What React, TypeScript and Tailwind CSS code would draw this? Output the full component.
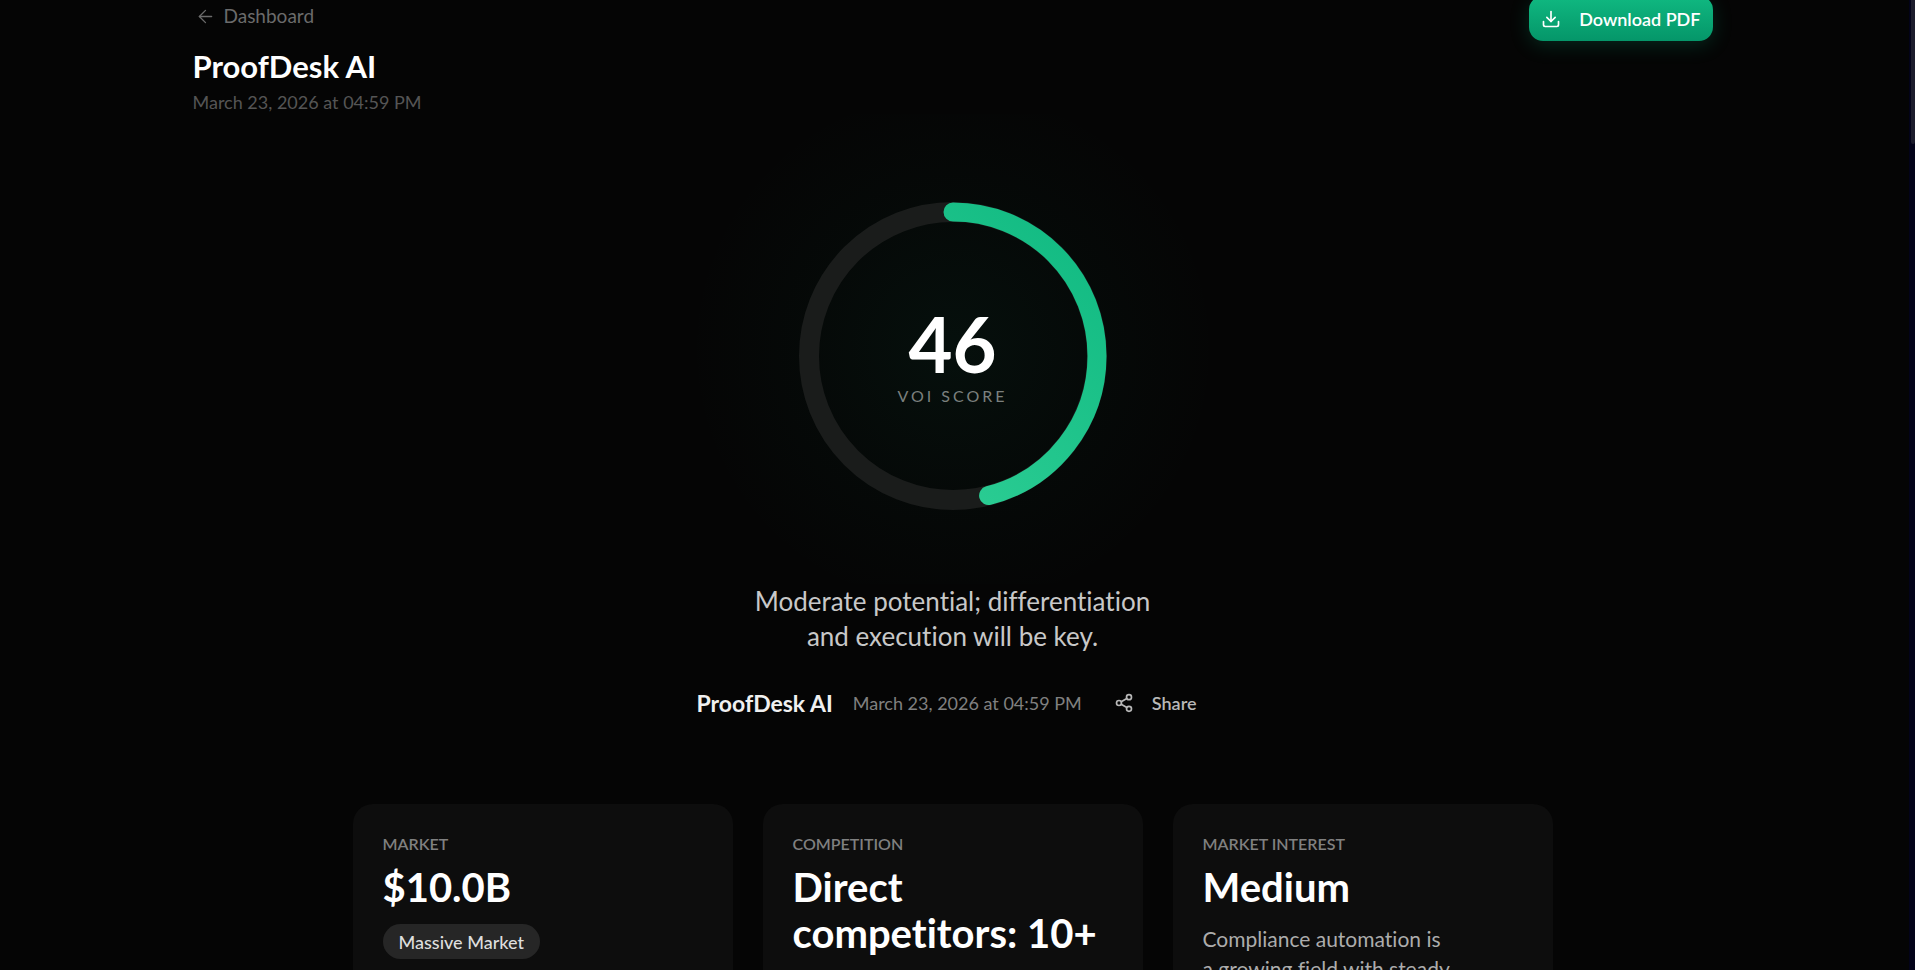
import { ArrowLeft, Download, Share2 } from "lucide-react";

const RADIUS = 144;
const CIRCUMFERENCE = 2 * Math.PI * RADIUS;

function ScoreRing({ score }: { score: number }) {
    return (
        <div className="relative flex items-center justify-center w-77 h-77">
            <svg viewBox="0 0 308 308" className="absolute inset-0 -rotate-90" aria-hidden="true">
                <defs>
                    <linearGradient id="ring" x1="0" y1="0" x2="1" y2="1">
                        <stop offset="0%" stopColor="#34d399" />
                        <stop offset="100%" stopColor="#10b981" />
                    </linearGradient>
                </defs>
                <circle cx="154" cy="154" r={RADIUS} fill="none" stroke="#1a1c1b" strokeWidth="20" />
                <circle
                    cx="154"
                    cy="154"
                    r={RADIUS}
                    fill="none"
                    stroke="url(#ring)"
                    strokeWidth="19"
                    strokeLinecap="round"
                    strokeDasharray={CIRCUMFERENCE}
                    strokeDashoffset={CIRCUMFERENCE * (1 - score / 100)}
                />
            </svg>
            <div className="relative flex flex-col items-center">
                <span className="text-[76px] leading-20 font-bold text-white">{score}</span>
                <span className="text-base leading-6 tracking-[3px] text-[#7b807e]">VOI SCORE</span>
            </div>
        </div>
    );
}

function StatCard({ label, value, children }: { label: string; value: string; children?: React.ReactNode }) {
    return (
        <article className="rounded-[20px] bg-[#0d0d0d] px-[30px] pt-7 pb-8">
            <h3 className="text-base leading-6 font-semibold uppercase text-[#808080]">{label}</h3>
            <p className="mt-2 text-[40px] leading-[46px] font-bold text-white">{value}</p>
            {children}
        </article>
    );
}

export default function App() {
    return (
        <div className="flex h-screen overflow-hidden bg-[#050505] font-['Lato',sans-serif] [font-variant-ligatures:none]">
            <main className="flex-1 min-w-0 pr-1">
                <div className="max-w-[1520px] mx-auto">
                    <header className="flex items-start justify-between -mt-1">
                        <div>
                            <a href="#dashboard" className="flex items-center gap-2 px-0.5 pt-2 text-[19px] leading-6 text-[#6b6b6b]">
                                <ArrowLeft size={21} strokeWidth={1.5} />
                                Dashboard
                            </a>
                            <h1 className="mt-[18px] text-[31px] leading-10 font-bold text-white">ProofDesk AI</h1>
                            <p className="mt-1 text-lg leading-6 text-[#555555]">March 23, 2026 at 04:59 PM</p>
                        </div>
                        <button className="flex items-center gap-[18px] h-[45px] px-3 rounded-[14px] bg-linear-to-b from-[#10b981] to-[#059669] text-lg font-semibold text-white shadow-[0_4px_20px_rgba(16,185,129,0.2)]">
                            <Download size={20} strokeWidth={2} />
                            Download PDF
                        </button>
                    </header>

                    <section className="flex flex-col items-center">
                        <div className="flex justify-center w-150 max-w-full pt-22 pb-[74px] bg-[radial-gradient(circle,rgba(16,185,129,0.06)_0%,rgba(16,185,129,0.02)_42%,transparent_70%)]">
                            <ScoreRing score={46} />
                        </div>
                        <p className="w-105 text-center text-[26px] leading-[35px] text-[#c8c8c8]">
                            Moderate potential; differentiation and execution will be key.
                        </p>
                        <div className="flex items-center gap-5 mt-[27px] h-11">
                            <h2 className="text-[23px] font-bold text-[#f0f0f0]">ProofDesk AI</h2>
                            <span className="text-lg text-[#808080]">March 23, 2026 at 04:59 PM</span>
                            <button className="flex items-center gap-[18px] px-3 text-lg font-semibold text-[#b8b8b8]">
                                <Share2 size={20} strokeWidth={2} />
                                Share
                            </button>
                        </div>
                    </section>

                    <section className="grid grid-cols-3 gap-[30px] max-w-[1200px] mx-auto mt-[79px]">
                        <StatCard label="Market" value="$10.0B">
                            <span className="inline-flex items-center h-[35px] mt-3.5 px-4 rounded-full bg-[#262626] text-lg font-medium text-[#dedede]">
                                Massive Market
                            </span>
                        </StatCard>
                        <StatCard label="Competition" value="Direct competitors: 10+" />
                        <StatCard label="Market Interest" value="Medium">
                            <p className="mt-3.5 w-[250px] text-[21px] leading-[30px] text-[#acacac]">
                                Compliance automation is a growing field with steady
                            </p>
                        </StatCard>
                    </section>
                </div>
            </main>
            <div className="w-1.5 bg-[#03031a]">
                <div className="h-36 ml-0.5 rounded-b bg-[#1c1c2c]" />
            </div>
        </div>
    );
}
